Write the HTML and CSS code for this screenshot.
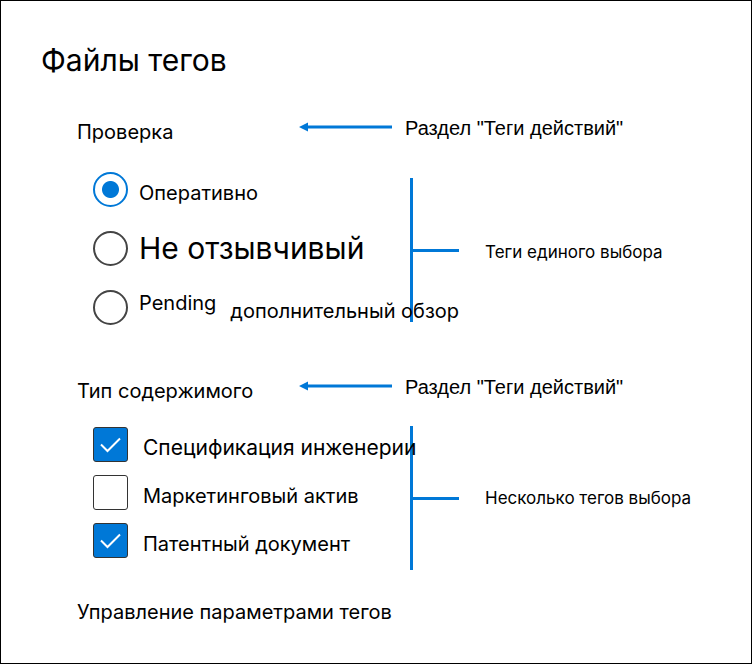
FILE: index.html
```html
<!DOCTYPE html>
<html lang="ru">
<head>
<meta charset="utf-8">
<meta name="viewport" content="width=device-width, initial-scale=1">
<title>Файлы тегов</title>
<link rel="stylesheet" href="styles.css">
</head>
<body>
<main class="panel">
  <h1 class="title">Файлы тегов</h1>

  <section class="section section-single">
    <header class="section-head">
      <h2 class="section-name">Проверка</h2>
      <svg class="arrow" viewBox="0 0 93 10" aria-hidden="true"><path d="M0 5 9 .5V3.500H93V6.500H9V9.500Z"/></svg>
      <p class="note">Раздел "Теги действий"</p>
    </header>
    <div class="section-body">
      <div class="options">
        <label class="option"><input class="radio" type="radio" name="review" checked><span class="text">Оперативно</span></label>
        <label class="option"><input class="radio" type="radio" name="review"><span class="text text-large">Не отзывчивый</span></label>
        <label class="option"><input class="radio" type="radio" name="review"><span class="text text-split"><span class="text-raised">Pending</span><span class="text-lowered">дополнительный обзор</span></span></label>
      </div>
      <div class="bracket"><p class="caption">Теги единого выбора</p></div>
    </div>
  </section>

  <section class="section section-multi">
    <header class="section-head">
      <h2 class="section-name">Тип содержимого</h2>
      <svg class="arrow" viewBox="0 0 93 10" aria-hidden="true"><path d="M0 5 9 .5V3.500H93V6.500H9V9.500Z"/></svg>
      <p class="note">Раздел "Теги действий"</p>
    </header>
    <div class="section-body">
      <div class="options">
        <label class="option"><span class="box"><input class="check" type="checkbox" checked><svg class="tick" viewBox="0 0 35 35" aria-hidden="true"><path d="M8 17.500 14.500 24 27 11.500"/></svg></span><span class="text text-wide">Спецификация инженерии</span></label>
        <label class="option"><span class="box"><input class="check" type="checkbox"><svg class="tick" viewBox="0 0 35 35" aria-hidden="true"><path d="M8 17.500 14.500 24 27 11.500"/></svg></span><span class="text">Маркетинговый актив</span></label>
        <label class="option"><span class="box"><input class="check" type="checkbox" checked><svg class="tick" viewBox="0 0 35 35" aria-hidden="true"><path d="M8 17.500 14.500 24 27 11.500"/></svg></span><span class="text">Патентный документ</span></label>
      </div>
      <div class="bracket"><p class="caption">Несколько тегов выбора</p></div>
    </div>
  </section>

  <a class="manage" href="#settings">Управление параметрами тегов</a>
</main>
</body>
</html>
```

FILE: styles.css
```css
* {
  box-sizing: border-box;
}

body {
  margin: 0;
  background: #fff;
  color: #000;
  font: 20px/24px Inter, "Liberation Sans", sans-serif;
  white-space: nowrap;
}

h1,
h2,
p {
  margin: 0;
  font-weight: 400;
}

.panel {
  min-height: 100vh;
  padding: 39px 40px 24px;
  border: 1px solid #000;
}

.title {
  font-size: 30px;
  line-height: 40px;
}

.section {
  margin-left: 36px;
}

.section-single {
  margin-top: 36px;
}

.section-multi {
  margin-top: 50px;
}

.section-head {
  display: grid;
  grid-template-columns: 222px 93px 1fr;
  align-items: start;
}

.section-name {
  padding-top: 4px;
  font-size: 20px;
  line-height: 24px;
}

.arrow {
  width: 93px;
  height: 10px;
  margin-top: 6px;
  fill: #0078d7;
}

.note {
  padding-left: 13px;
  font-family: "Liberation Sans", sans-serif;
}

.section-body {
  display: grid;
  grid-template-columns: 333px 1fr;
}

.section-single .section-body {
  margin-top: 28px;
}

.section-multi .section-body {
  margin-top: 24px;
}

.options {
  position: relative;
  z-index: 1;
  display: flex;
  flex-direction: column;
  padding-left: 16px;
}

.section-single .options {
  gap: 24px;
}

.section-multi .options {
  gap: 13px;
}

.option {
  display: flex;
  align-items: center;
  gap: 11px;
  height: 35px;
}

.section-multi .option {
  gap: 15px;
}

.text {
  padding-top: 6px;
}

.text-large {
  padding: 0 0 2px;
  font-size: 30px;
  line-height: 36px;
}

.text-wide {
  font-size: 21px;
}

.text-split {
  display: flex;
  gap: 14px;
  padding: 0 0 2px;
}

.text-raised {
  padding-bottom: 8px;
}

.text-lowered {
  padding-top: 8px;
}

.radio,
.check {
  appearance: none;
  flex: none;
  width: 35px;
  height: 35px;
  margin: 0;
  border: 1px solid #333;
  background: #fff;
}

.radio {
  border-width: 2px;
  border-color: #444;
  border-radius: 50%;
}

.radio:checked {
  border-color: #0078d7;
  background: radial-gradient(circle, #0078d7 8px, #fff 9px);
}

.box {
  display: grid;
  flex: none;
}

.box > * {
  grid-area: 1 / 1;
}

.check {
  border-radius: 3px;
}

.check:checked {
  background: #0078d7;
}

.tick {
  width: 35px;
  height: 35px;
  fill: none;
  stroke: #fff;
  stroke-width: 2;
  pointer-events: none;
}

.check:not(:checked) + .tick {
  visibility: hidden;
}

.bracket {
  display: flex;
  align-items: center;
  align-self: center;
  height: 144px;
  border-left: 3px solid #0078d7;
}

.bracket::before {
  content: "";
  width: 46px;
  height: 3px;
  background: #0078d7;
}

.section-single .bracket {
  margin-top: 3px;
}

.section-multi .bracket {
  align-self: start;
  margin-top: -1px;
}

.caption {
  padding-left: 26px;
  font-size: 17px;
}

.section-single .caption {
  padding-top: 4px;
}

.manage {
  display: inline-block;
  margin: 30px 0 0 36px;
  color: inherit;
  text-decoration: none;
}
```
